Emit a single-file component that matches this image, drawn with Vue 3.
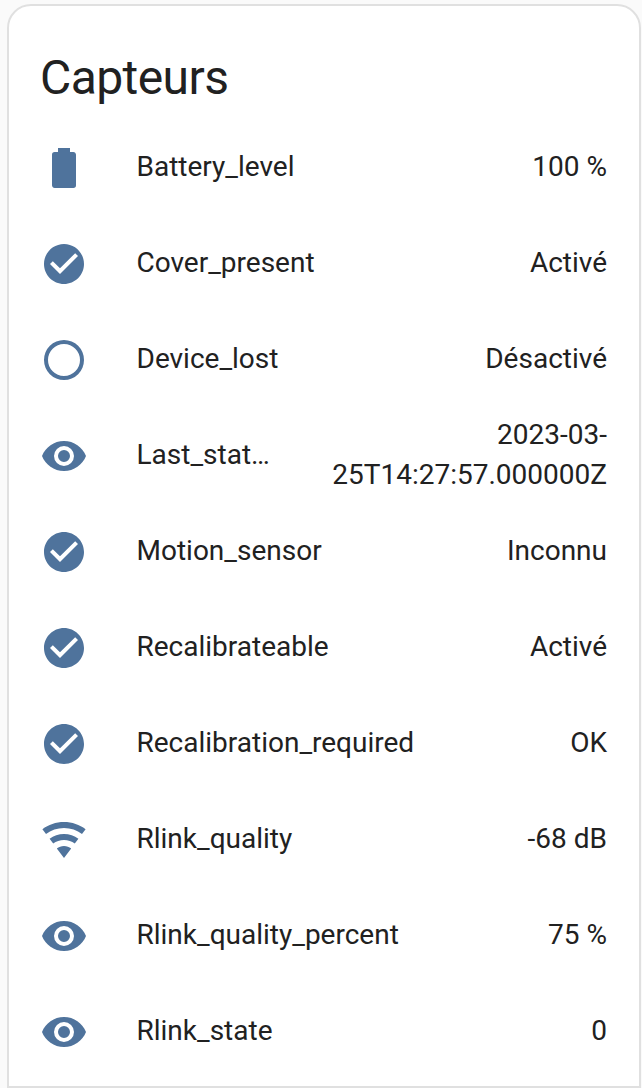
<script setup>
const icons = {
  battery: 'M16.67,4H15V2H9V4H7.33A1.33,1.33 0 0,0 6,5.33V20.67C6,21.4 6.6,22 7.33,22H16.67A1.33,1.33 0 0,0 18,20.67V5.33C18,4.6 17.4,4 16.67,4Z',
  check: 'M12 2C6.5 2 2 6.5 2 12S6.5 22 12 22 22 17.5 22 12 17.5 2 12 2M10 17L5 12L6.41 10.59L10 14.17L17.59 6.58L19 8L10 17Z',
  circle: 'M12,20A8,8 0 0,1 4,12A8,8 0 0,1 12,4A8,8 0 0,1 20,12A8,8 0 0,1 12,20M12,2A10,10 0 0,0 2,12A10,10 0 0,0 12,22A10,10 0 0,0 22,12A10,10 0 0,0 12,2Z',
  eye: 'M12,9A3,3 0 0,0 9,12A3,3 0 0,0 12,15A3,3 0 0,0 15,12A3,3 0 0,0 12,9M12,17A5,5 0 0,1 7,12A5,5 0 0,1 12,7A5,5 0 0,1 17,12A5,5 0 0,1 12,17M12,4.5C7,4.5 2.73,7.61 1,12C2.73,16.39 7,19.5 12,19.5C17,19.5 21.27,16.39 23,12C21.27,7.61 17,4.5 12,4.5Z',
  wifi: 'M12,21L15.6,16.2C14.6,15.45 13.35,15 12,15C10.65,15 9.4,15.45 8.4,16.2L12,21M12,3C7.95,3 4.21,4.34 1.2,6.6L3,9C5.5,7.12 8.62,6 12,6C15.38,6 18.5,7.12 21,9L22.8,6.6C19.79,4.34 16.05,3 12,3M12,9C9.3,9 6.81,9.89 4.8,11.4L6.6,13.8C8.1,12.67 9.97,12 12,12C14.03,12 15.9,12.67 17.4,13.8L19.2,11.4C17.19,9.89 14.7,9 12,9Z'
}

const sensors = [
  { name: 'Battery_level', icon: 'battery', state: '100 %' },
  { name: 'Cover_present', icon: 'check', state: 'Activé' },
  { name: 'Device_lost', icon: 'circle', state: 'Désactivé' },
  { name: 'Last_status', icon: 'eye', state: '2023-03-25T14:27:57.000000Z' },
  { name: 'Motion_sensor', icon: 'check', state: 'Inconnu' },
  { name: 'Recalibrateable', icon: 'check', state: 'Activé' },
  { name: 'Recalibration_required', icon: 'check', state: 'OK' },
  { name: 'Rlink_quality', icon: 'wifi', state: '-68 dB' },
  { name: 'Rlink_quality_percent', icon: 'eye', state: '75 %' },
  { name: 'Rlink_state', icon: 'eye', state: '0' }
]
</script>

<template>
  <div class="page">
    <section class="card">
      <h1 class="card-header">Capteurs</h1>
      <div v-for="sensor in sensors" :key="sensor.name" class="row">
        <svg class="icon" viewBox="0 0 24 24">
          <path :d="icons[sensor.icon]" />
        </svg>
        <div class="name">{{ sensor.name }}</div>
        <div class="state">{{ sensor.state }}</div>
      </div>
    </section>
  </div>
</template>

<style>
body {
  margin: 0;
  background: #fafafa;
}
</style>

<style scoped>
.page {
  box-sizing: border-box;
  height: 1088px;
  padding: 4px 1px 0 7px;
  overflow: hidden;
  font-family: Roboto, sans-serif;
  color: #212121;
}

.card {
  box-sizing: border-box;
  height: 1084px;
  padding: 0 32px 0 31px;
  background: #ffffff;
  border: 2px solid #e0e0e0;
  border-radius: 24px 24px 0 0;
}

.card-header {
  height: 80px;
  margin: 0;
  padding: 24px 0 18px;
  font-size: 48px;
  font-weight: 400;
  line-height: 96px;
  letter-spacing: -0.576px;
}

.row {
  display: flex;
  align-items: center;
  height: 80px;
  margin-bottom: 16px;
}

.icon {
  flex: none;
  width: 48px;
  height: 48px;
  fill: #4f739c;
}

.name {
  flex: 1 1 30%;
  min-width: 0;
  margin-left: 48.5px;
  padding-bottom: 2px;
  overflow: hidden;
  font-size: 28px;
  line-height: 40px;
  text-overflow: ellipsis;
  white-space: nowrap;
}

.state {
  min-width: 0;
  padding-bottom: 2px;
  font-size: 28px;
  line-height: 40px;
  text-align: right;
}
</style>
